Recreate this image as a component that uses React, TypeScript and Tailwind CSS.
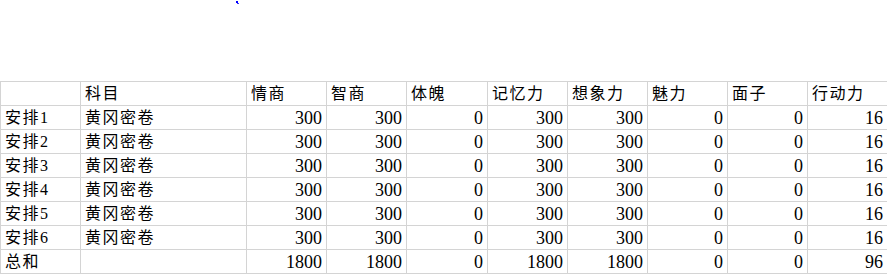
import React from "react";

const headers = ["", "科目", "情商", "智商", "体魄", "记忆力", "想象力", "魅力", "面子", "行动力"];
const rowVals = [300, 300, 0, 300, 300, 0, 0, 16];
const rows: (string | number)[][] = [
  ...[1, 2, 3, 4, 5, 6].map((i) => [`安排${i}`, "黄冈密卷", ...rowVals]),
  ["总和", "", 1800, 1800, 0, 1800, 1800, 0, 0, 96],
];

function Cell({ v }: { v: string | number }) {
  if (typeof v === "number") {
    return (
      <div className="bg-white h-[23px] flex items-center justify-end pr-[4px] text-[18px] leading-none text-black font-['Liberation_Serif',serif]">
        {v}
      </div>
    );
  }
  return (
    <div className="bg-white h-[23px] flex items-center pl-[4px] text-[16px] leading-none tracking-[1.5px] text-black whitespace-nowrap overflow-hidden font-['Liberation_Serif','Noto_Sans_CJK_SC',serif]">
      {v}
    </div>
  );
}

export default function App() {
  return (
    <div className="relative w-[887px] h-[274px] bg-white overflow-hidden">
      <div className="absolute left-[236px] top-[1px] w-[2px] h-[2px] bg-[#0000ff]" />
      <div className="absolute left-[237px] top-[3px] w-[2px] h-[1px] bg-[#3333ff]" />
      <div className="pt-[81px]">
        <div className="grid grid-cols-[79px_165px_79px_79px_80px_79px_79px_79px_79px_79px] gap-px bg-[#d4d4d4] pl-px pt-px pb-px w-[888px]">
          {headers.map((h, i) => (
            <Cell key={`h${i}`} v={h} />
          ))}
          {rows.map((r, ri) => r.map((v, ci) => <Cell key={`${ri}-${ci}`} v={v} />))}
        </div>
      </div>
    </div>
  );
}
